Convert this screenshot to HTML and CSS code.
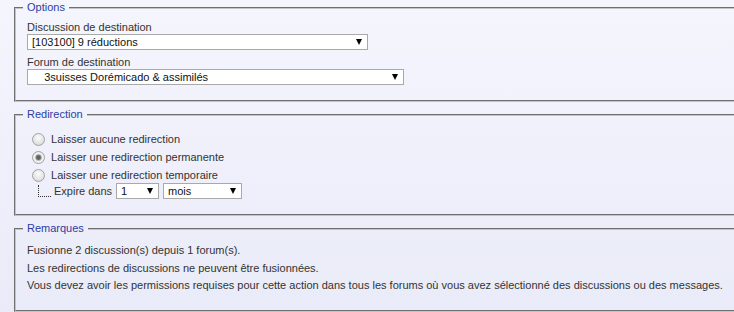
FILE: index.html
```html
<!DOCTYPE html>
<html lang="fr">
<head>
    <meta charset="UTF-8">
    <title>Fusionner des discussions</title>
    <link rel="stylesheet" href="styles.css">
</head>
<body>
    <fieldset class="box">
        <legend>Options</legend>
        <div class="field">
            <label for="to_topic">Discussion de destination</label>
            <span class="select topic"><select id="to_topic"><option>[103100] 9 réductions</option></select></span>
        </div>
        <div class="field">
            <label for="to_forum">Forum de destination</label>
            <span class="select forum"><select id="to_forum"><option>&nbsp;&nbsp;&nbsp;&nbsp;3suisses Dorémicado &amp; assimilés</option></select></span>
        </div>
    </fieldset>

    <fieldset class="box redirect">
        <legend>Redirection</legend>
        <div class="radios">
            <label><input type="radio" name="redirect" value="none"> Laisser aucune redirection</label>
            <label><input type="radio" name="redirect" value="permanent" checked> Laisser une redirection permanente</label>
            <label><input type="radio" name="redirect" value="temp"> Laisser une redirection temporaire</label>
            <div class="expire">
                <span class="tree"></span>
                <span class="expire-label">Expire dans</span>
                <span class="select num"><select><option>1</option></select></span>
                <span class="select unit"><select><option>mois</option></select></span>
            </div>
        </div>
    </fieldset>

    <fieldset class="box notes">
        <legend>Remarques</legend>
        <p>Fusionne 2 discussion(s) depuis 1 forum(s).</p>
        <p>Les redirections de discussions ne peuvent être fusionnées.</p>
        <p>Vous devez avoir les permissions requises pour cette action dans tous les forums où vous avez sélectionné des discussions ou des messages.</p>
    </fieldset>
</body>
</html>
```

FILE: styles.css
```css
html {
    background: #eef0fa;
}

body {
    margin: 0;
    padding: 1px 0 0 14px;
    box-sizing: border-box;
    height: 100vh;
    font-family: "Liberation Sans", Arial, sans-serif;
    font-size: 11px;
    color: #333;
    background: linear-gradient(#f5f5fd, #e9ebf8);
    overflow: hidden;
}

fieldset.box {
    margin: 0 0 6px 0;
    padding: 7px 0 15px 11px;
    border: 2px groove #c4c4c4;
    border-right: none;
}

fieldset.box legend {
    color: #2b3ea6;
    padding: 0 4px;
    margin-left: -4px;
    line-height: 13px;
    white-space: nowrap;
}

.field label {
    display: block;
    line-height: 13px;
}

.field + .field {
    margin-top: 6px;
}

.select {
    position: relative;
    display: inline-block;
    vertical-align: middle;
}

.select select {
    appearance: none;
    -webkit-appearance: none;
    display: block;
    height: 16px;
    margin: 0;
    padding: 0 12px 0 4px;
    font: inherit;
    color: #111;
    background: #fff;
    border: 1px solid #a9a9a9;
    border-radius: 0;
}

.select::after {
    content: "";
    position: absolute;
    right: 6px;
    top: 5px;
    border-top: 6px solid #000;
    border-left: 3.5px solid transparent;
    border-right: 3.5px solid transparent;
    pointer-events: none;
}

.select.topic select { width: 341px; }
.select.forum select { width: 377px; }
.select.num select { width: 43px; }
.select.unit select { width: 79px; }

.redirect {
    padding-bottom: 21px;
}

.radios {
    padding-top: 2px;
}

.radios label {
    display: block;
    height: 18px;
    line-height: 18px;
}

.radios input {
    appearance: none;
    -webkit-appearance: none;
    width: 13px;
    height: 13px;
    margin: 0 3px 0 5px;
    vertical-align: -3px;
    border: 1px solid #a2a2a2;
    border-radius: 50%;
    background: radial-gradient(circle at 50% 35%, #fafafa 0, #e4e4e4 60%, #d0d0d0 100%);
}

.radios input:checked {
    background: radial-gradient(circle, #5a5a5a 0, #6c6c6c 2px, #b8b8b8 3px, #f2f2f2 4px, #e2e2e2 100%);
}

.expire {
    display: flex;
    align-items: flex-end;
    height: 17px;
    margin-top: -2px;
}

.tree {
    width: 12px;
    height: 11px;
    margin: 0 3px 2px 11px;
    border-left: 1px dotted #333;
    border-bottom: 1px dotted #333;
}

.expire-label {
    line-height: 15px;
    margin-right: 4px;
}

.expire .num {
    margin-right: 4px;
}

.notes {
    padding-bottom: 8px;
}

.notes p {
    margin: 0;
    line-height: 17.5px;
}
```
